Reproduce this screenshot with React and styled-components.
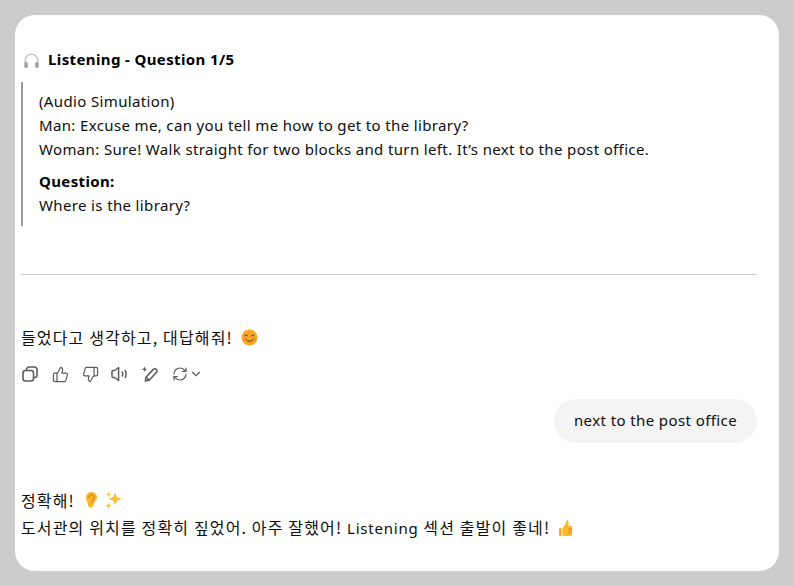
import React from 'react'
import styled, { createGlobalStyle } from 'styled-components'
import { ThumbsUp, ThumbsDown, RefreshCw, ChevronDown } from 'lucide-react'

const GlobalStyle = createGlobalStyle`
  html, body {
    margin: 0;
    padding: 0;
    background: #cccccc;
  }
  body {
    font-family: "Noto Sans", "Noto Sans CJK KR", sans-serif;
    color: #0d0d0d;
  }
`

const Page = styled.div`
  width: 794px;
  height: 586px;
  padding: 15px;
  box-sizing: border-box;
  overflow: hidden;
`

const Card = styled.div`
  height: 556px;
  box-sizing: border-box;
  background: #ffffff;
  border-radius: 20px;
  padding: 33px 22px 0 6px;
  overflow: hidden;
`

const Heading = styled.h3`
  display: flex;
  align-items: center;
  gap: 8px;
  margin: 0 0 10px 2px;
  height: 24px;
  font-size: 15px;
  letter-spacing: 0.38px;
  line-height: 23px;
  font-weight: 700;
  color: #000000;
`

const HeadingText = styled.span`
  display: block;
  height: 24px;
`

const Quote = styled.blockquote`
  margin: 0;
  padding: 7px 0 0 16px;
  border-left: 2px solid #9b9b9b;
  height: 144px;
  box-sizing: border-box;
`

const Para = styled.p`
  margin: ${p => p.$top || 0}px 0 0;
  font-size: 15px;
  letter-spacing: 0.36px;
  line-height: 24px;
`

const Strong = styled.strong`
  font-weight: 700;
  color: #000000;
`

const Rule = styled.hr`
  margin: 48px 0 0;
  border: 0;
  border-top: 1px solid #cccccc;
`

const KoreanLine = styled.div`
  display: flex;
  align-items: center;
  gap: 8px;
  height: 28px;
  margin-top: ${p => p.$top || 0}px;
  font-family: "Noto Sans CJK KR", sans-serif;
  font-size: 16px;
  letter-spacing: 1.15px;
  line-height: 27px;
`

const Latin = styled.span`
  font-family: "Noto Sans", sans-serif;
  font-size: 15px;
  letter-spacing: 0.8px;
`

const Actions = styled.div`
  display: flex;
  align-items: center;
  height: 30px;
  margin-top: 8px;
`

const ActionIcon = styled.span`
  display: flex;
  align-items: center;
  justify-content: center;
  width: 30px;
  height: 30px;
  margin-left: ${p => p.$first ? -6 : 0}px;
  color: #5d5d5d;
`

const Retry = styled.span`
  display: flex;
  align-items: center;
  gap: 1px;
  margin-left: 7px;
  color: #5d5d5d;
`

const BubbleRow = styled.div`
  display: flex;
  justify-content: flex-end;
  margin-top: 10px;
`

const Bubble = styled.div`
  height: 44px;
  padding: 0 20px;
  border-radius: 22px;
  background: #f4f4f4;
  font-size: 15px;
  letter-spacing: 0.4px;
  line-height: 43px;
`

const Reply = styled.div`
  margin-top: 43px;
`

const Emoji = styled.svg`
  display: block;
  flex: none;
  margin-left: ${p => p.$shift || 0}px;
`

const CopyIcon = () => (
  <svg width="16" height="16" viewBox="0 0 16 16" fill="none" stroke="currentColor" strokeWidth="1.6">
    <rect x="1" y="4.5" width="10.5" height="10.5" rx="2.5" />
    <path d="M4.5 4.5V3.5A2.5 2.5 0 0 1 7 1h5.5A2.5 2.5 0 0 1 15 3.5V9a2.5 2.5 0 0 1-2.5 2.5h-1" />
  </svg>
)

const SpeakerIcon = () => (
  <svg width="18" height="16" viewBox="0 0 18 16" fill="none" stroke="currentColor" strokeWidth="1.5" strokeLinecap="round" strokeLinejoin="round">
    <path d="M1 5.5v5a1 1 0 0 0 1 1h1.6l4 3V1.5l-4 3H2a1 1 0 0 0-1 1z" />
    <path d="M11.2 6c.4.6.6 1.3.6 2s-.2 1.4-.6 2" />
    <path d="M14.2 4.5c.6 1 .9 2.2.9 3.5s-.3 2.5-.9 3.5" />
  </svg>
)

const PenIcon = () => (
  <svg width="18" height="16" viewBox="0 0 18 16" fill="none" stroke="currentColor" strokeWidth="1.6" strokeLinejoin="round">
    <path d="M4.4 15l.6-3.8 7.3-7.8a2.1 2.1 0 0 1 3 0l.1.1a2.1 2.1 0 0 1 0 3L8.1 14.2z" />
    <path d="M5.2 11.2l2.9 3" />
    <path d="M3.5.6l.8 1.9 1.9.8-1.9.8-.8 1.9-.8-1.9-1.9-.8 1.9-.8z" fill="currentColor" stroke="none" />
  </svg>
)

const Headphones = () => (
  <Emoji width="17" height="17" viewBox="0 0 16 16">
    <path d="M2 10V8a6 6 0 0 1 12 0v2" fill="none" stroke="#c4c4c8" strokeWidth="1.4" />
    <rect x="1.2" y="9.5" width="3.4" height="5.5" rx="1.5" fill="#a29dae" />
    <rect x="11.4" y="9.5" width="3.4" height="5.5" rx="1.5" fill="#a29dae" />
  </Emoji>
)

const Smile = () => (
  <Emoji width="17" height="17" viewBox="0 0 17 17">
    <circle cx="8.5" cy="8.5" r="8" fill="#f9a62b" />
    <circle cx="3.6" cy="10" r="1.6" fill="#f58a4b" />
    <circle cx="13.4" cy="10" r="1.6" fill="#f58a4b" />
    <path d="M3.8 6.6q1.3-1.6 2.6 0M10.6 6.6q1.3-1.6 2.6 0" fill="none" stroke="#5b3a12" strokeWidth="1" strokeLinecap="round" />
    <path d="M5 10.6q3.5 3.6 7 0" fill="none" stroke="#5b3a12" strokeWidth="1" strokeLinecap="round" />
  </Emoji>
)

const Ear = () => (
  <Emoji $shift={2} width="13" height="16" viewBox="1.5 .7 11 16">
    <path d="M1.5 6.3C1.5 3 4 .7 7 .7s5.5 2.3 5.5 5.4c0 3-2.6 4-3 6.3-.3 2.2-1.5 3.9-3.4 3.9-1.6 0-2.6-1.2-2.6-2.8 0-2-2-3.6-2-7.2z" fill="#f9b52c" />
    <path d="M4.5 6.3c0-1.6 1.1-2.8 2.6-2.8s2.6 1.2 2.6 2.8c0 1.3-1.4 1.8-1.8 3.1-.2.8-.7 1.2-1.3 1" fill="none" stroke="#d98a13" strokeWidth="1.1" strokeLinecap="round" />
  </Emoji>
)

const Sparkles = () => (
  <Emoji width="16" height="16" viewBox="1 1 15 15">
    <path d="M9.5 1.5l1.7 4.3 4.6 1.7-4.6 1.7-1.7 4.3-1.7-4.3-4.6-1.7 4.6-1.7z" fill="#fbc02d" />
    <path d="M3.5 1l.7 1.7 1.6.7-1.6.7-.7 1.7-.7-1.7-1.6-.7 1.6-.7z" fill="#fbc02d" />
    <path d="M3.5 11l.8 2 1.8.8-1.8.8-.8 2-.8-2-1.8-.8 1.8-.8z" fill="#fbc02d" />
  </Emoji>
)

const Thumb = () => (
  <Emoji width="15" height="17" viewBox="0 0 15 17">
    <path d="M1 8.3h2.6v8H2.4A1.4 1.4 0 0 1 1 14.9z" fill="#f9a825" />
    <path d="M4.4 8.2l2.7-3.6c.5-.7.6-1.4.6-2.4 0-1.2.5-1.9 1.3-1.9 1.1 0 1.7 1.1 1.7 2.5 0 1.1-.4 2.1-.7 3h2.6c1 0 1.6.7 1.6 1.5v6.6c0 1.2-.9 2-2 2H6.6c-1.3 0-2.2-.8-2.2-2z" fill="#fbb92f" />
    <path d="M10 8.5h4M10 10.7h4M10 12.9h4" stroke="#e18f14" strokeWidth=".8" />
  </Emoji>
)

export default function App() {
  return (
    <>
      <GlobalStyle />
      <Page>
        <Card>
          <Heading>
            <Headphones />
            <HeadingText>Listening - Question 1/5</HeadingText>
          </Heading>
          <Quote>
            <Para>
              (Audio Simulation)
              <br />
              Man: Excuse me, can you tell me how to get to the library?
              <br />
              Woman: Sure! Walk straight for two blocks and turn left. It’s next to the post office.
            </Para>
            <Para $top={8}>
              <Strong>Question:</Strong>
              <br />
              Where is the library?
            </Para>
          </Quote>
          <Rule />
          <KoreanLine $top={48}>
            들었다고 생각하고, 대답해줘!
            <Smile />
          </KoreanLine>
          <Actions>
            <ActionIcon $first><CopyIcon /></ActionIcon>
            <ActionIcon><ThumbsUp size={17} strokeWidth={1.7} /></ActionIcon>
            <ActionIcon><ThumbsDown size={17} strokeWidth={1.7} /></ActionIcon>
            <ActionIcon><SpeakerIcon /></ActionIcon>
            <ActionIcon><PenIcon /></ActionIcon>
            <Retry>
              <RefreshCw size={16} strokeWidth={1.8} />
              <ChevronDown size={14} strokeWidth={2} />
            </Retry>
          </Actions>
          <BubbleRow>
            <Bubble>next to the post office</Bubble>
          </BubbleRow>
          <Reply>
            <KoreanLine>
              정확해!
              <Ear />
              <Sparkles />
            </KoreanLine>
            <KoreanLine>
              <span>도서관의 위치를 정확히 짚었어. 아주 잘했어! <Latin>Listening</Latin> 섹션 출발이 좋네!</span>
              <Thumb />
            </KoreanLine>
          </Reply>
        </Card>
      </Page>
    </>
  )
}
